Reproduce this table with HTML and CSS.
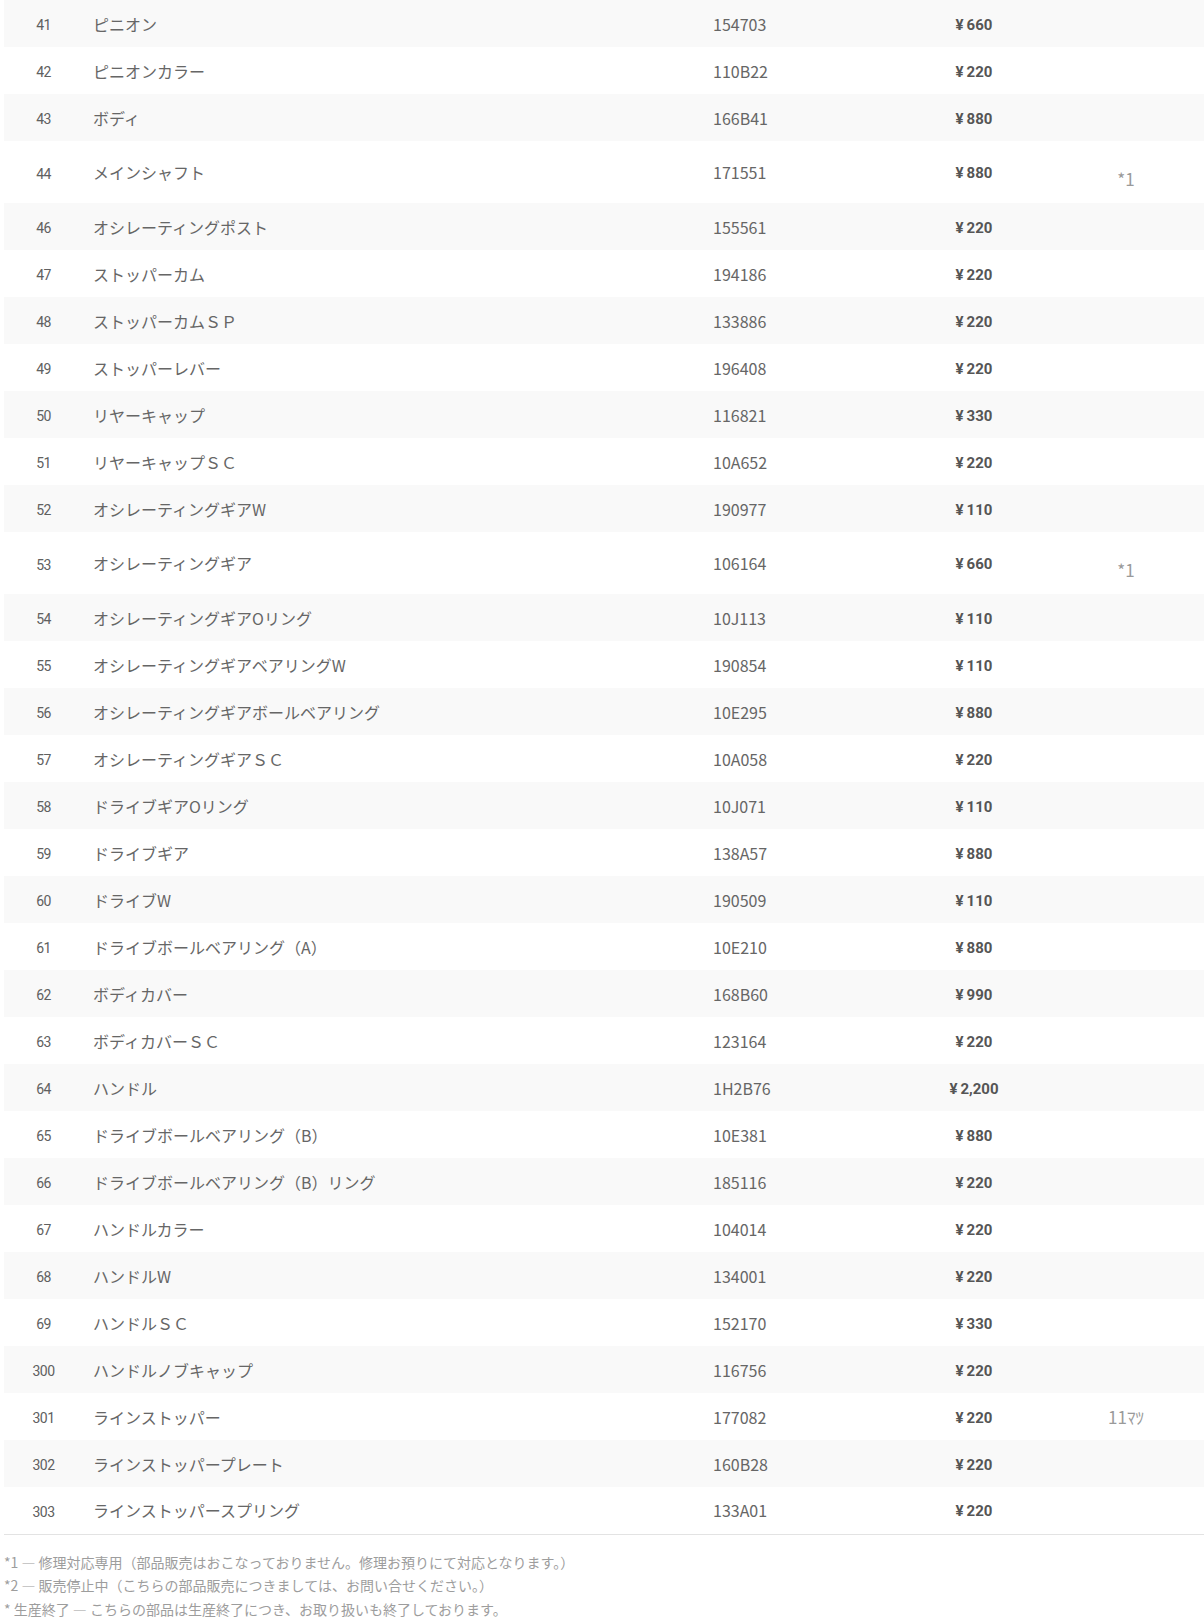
FILE: index.html
```html
<!DOCTYPE html>
<html lang="ja">
<head>
<meta charset="utf-8">
<title>パーツリスト</title>
<link rel="stylesheet" href="styles.css">
</head>
<body>
<div class="parts">
  <table class="parts-table">
    <colgroup>
      <col class="c-no"><col class="c-name"><col class="c-code"><col class="c-price"><col class="c-note">
    </colgroup>
    <tbody>
      <tr><td class="no">41</td><td class="name">ピニオン</td><td class="code">154703</td><td class="price"><span class="yen">¥</span>660</td><td class="note"></td></tr>
      <tr><td class="no">42</td><td class="name">ピニオンカラー</td><td class="code">110B22</td><td class="price"><span class="yen">¥</span>220</td><td class="note"></td></tr>
      <tr><td class="no">43</td><td class="name">ボディ</td><td class="code">166B41</td><td class="price"><span class="yen">¥</span>880</td><td class="note"></td></tr>
      <tr class="tall"><td class="no">44</td><td class="name">メインシャフト</td><td class="code">171551</td><td class="price"><span class="yen">¥</span>880</td><td class="note">*1</td></tr>
      <tr><td class="no">46</td><td class="name">オシレーティングポスト</td><td class="code">155561</td><td class="price"><span class="yen">¥</span>220</td><td class="note"></td></tr>
      <tr><td class="no">47</td><td class="name">ストッパーカム</td><td class="code">194186</td><td class="price"><span class="yen">¥</span>220</td><td class="note"></td></tr>
      <tr><td class="no">48</td><td class="name">ストッパーカムＳＰ</td><td class="code">133886</td><td class="price"><span class="yen">¥</span>220</td><td class="note"></td></tr>
      <tr><td class="no">49</td><td class="name">ストッパーレバー</td><td class="code">196408</td><td class="price"><span class="yen">¥</span>220</td><td class="note"></td></tr>
      <tr><td class="no">50</td><td class="name">リヤーキャップ</td><td class="code">116821</td><td class="price"><span class="yen">¥</span>330</td><td class="note"></td></tr>
      <tr><td class="no">51</td><td class="name">リヤーキャップＳＣ</td><td class="code">10A652</td><td class="price"><span class="yen">¥</span>220</td><td class="note"></td></tr>
      <tr><td class="no">52</td><td class="name">オシレーティングギアW</td><td class="code">190977</td><td class="price"><span class="yen">¥</span>110</td><td class="note"></td></tr>
      <tr class="tall"><td class="no">53</td><td class="name">オシレーティングギア</td><td class="code">106164</td><td class="price"><span class="yen">¥</span>660</td><td class="note">*1</td></tr>
      <tr><td class="no">54</td><td class="name">オシレーティングギアOリング</td><td class="code">10J113</td><td class="price"><span class="yen">¥</span>110</td><td class="note"></td></tr>
      <tr><td class="no">55</td><td class="name">オシレーティングギアベアリングW</td><td class="code">190854</td><td class="price"><span class="yen">¥</span>110</td><td class="note"></td></tr>
      <tr><td class="no">56</td><td class="name">オシレーティングギアボールベアリング</td><td class="code">10E295</td><td class="price"><span class="yen">¥</span>880</td><td class="note"></td></tr>
      <tr><td class="no">57</td><td class="name">オシレーティングギアＳＣ</td><td class="code">10A058</td><td class="price"><span class="yen">¥</span>220</td><td class="note"></td></tr>
      <tr><td class="no">58</td><td class="name">ドライブギアOリング</td><td class="code">10J071</td><td class="price"><span class="yen">¥</span>110</td><td class="note"></td></tr>
      <tr><td class="no">59</td><td class="name">ドライブギア</td><td class="code">138A57</td><td class="price"><span class="yen">¥</span>880</td><td class="note"></td></tr>
      <tr><td class="no">60</td><td class="name">ドライブW</td><td class="code">190509</td><td class="price"><span class="yen">¥</span>110</td><td class="note"></td></tr>
      <tr><td class="no">61</td><td class="name">ドライブボールベアリング（A）</td><td class="code">10E210</td><td class="price"><span class="yen">¥</span>880</td><td class="note"></td></tr>
      <tr><td class="no">62</td><td class="name">ボディカバー</td><td class="code">168B60</td><td class="price"><span class="yen">¥</span>990</td><td class="note"></td></tr>
      <tr><td class="no">63</td><td class="name">ボディカバーＳＣ</td><td class="code">123164</td><td class="price"><span class="yen">¥</span>220</td><td class="note"></td></tr>
      <tr><td class="no">64</td><td class="name">ハンドル</td><td class="code">1H2B76</td><td class="price"><span class="yen">¥</span>2,200</td><td class="note"></td></tr>
      <tr><td class="no">65</td><td class="name">ドライブボールベアリング（B）</td><td class="code">10E381</td><td class="price"><span class="yen">¥</span>880</td><td class="note"></td></tr>
      <tr><td class="no">66</td><td class="name">ドライブボールベアリング（B）リング</td><td class="code">185116</td><td class="price"><span class="yen">¥</span>220</td><td class="note"></td></tr>
      <tr><td class="no">67</td><td class="name">ハンドルカラー</td><td class="code">104014</td><td class="price"><span class="yen">¥</span>220</td><td class="note"></td></tr>
      <tr><td class="no">68</td><td class="name">ハンドルW</td><td class="code">134001</td><td class="price"><span class="yen">¥</span>220</td><td class="note"></td></tr>
      <tr><td class="no">69</td><td class="name">ハンドルＳＣ</td><td class="code">152170</td><td class="price"><span class="yen">¥</span>330</td><td class="note"></td></tr>
      <tr><td class="no">300</td><td class="name">ハンドルノブキャップ</td><td class="code">116756</td><td class="price"><span class="yen">¥</span>220</td><td class="note"></td></tr>
      <tr><td class="no">301</td><td class="name">ラインストッパー</td><td class="code">177082</td><td class="price"><span class="yen">¥</span>220</td><td class="note">11ﾏﾂ</td></tr>
      <tr><td class="no">302</td><td class="name">ラインストッパープレート</td><td class="code">160B28</td><td class="price"><span class="yen">¥</span>220</td><td class="note"></td></tr>
      <tr><td class="no">303</td><td class="name">ラインストッパースプリング</td><td class="code">133A01</td><td class="price"><span class="yen">¥</span>220</td><td class="note"></td></tr>
    </tbody>
  </table>
  <ul class="footnotes">
    <li>*1 ― 修理対応専用（部品販売はおこなっておりません。修理お預りにて対応となります。）</li>
    <li>*2 ― 販売停止中（こちらの部品販売につきましては、お問い合せください。）</li>
    <li>* 生産終了 ― こちらの部品は生産終了につき、お取り扱いも終了しております。</li>
  </ul>
</div>
</body>
</html>
```

FILE: styles.css
```css
html, body {
  margin: 0;
  padding: 0;
  background: #fff;
  overflow: hidden;
}

body {
  font-family: "Noto Sans CJK JP", sans-serif;
  color: #555;
}

.parts {
  padding-left: 4px;
  width: 1200px;
}

.parts-table {
  width: 1200px;
  border-collapse: collapse;
  table-layout: fixed;
  border-bottom: 1px solid #e3e3e3;
}

.c-no { width: 79px; }
.c-name { width: 620px; }
.c-code { width: 197px; }
.c-price { width: 148px; }
.c-note { width: 156px; }

.parts-table tr:nth-child(odd) {
  background: #f9f9f9;
}

.parts-table td {
  box-sizing: border-box;
  height: 47px;
  padding: 0;
  vertical-align: middle;
  line-height: 20px;
}

.parts-table tr.tall td {
  height: 62px;
}

.parts-table td.no {
  text-align: center;
  font-family: "Roboto", "Noto Sans CJK JP", sans-serif;
  font-weight: 400;
  font-size: 14px;
  letter-spacing: -0.04em;
  color: #606060;
  padding-top: 3px;
}

.parts-table td.name {
  padding-left: 10px;
  font-family: "Noto Sans CJK JP", sans-serif;
  font-weight: 400;
  font-size: 16px;
  color: #666;
}

.parts-table td.code {
  padding-left: 10px;
  font-family: "Noto Sans CJK JP", sans-serif;
  font-weight: 400;
  font-size: 16px;
  color: #666;
}

.parts-table td.price {
  text-align: center;
  font-family: "Roboto", "Liberation Sans", sans-serif;
  font-weight: 700;
  font-size: 15px;
  color: #555;
  padding-top: 2px;
}

.yen {
  margin-right: 3px;
}

.parts-table td.note {
  text-align: center;
  font-family: "Noto Sans CJK JP", sans-serif;
  font-weight: 400;
  font-size: 17px;
  color: #9a9a9a;
}

.parts-table tr.tall td.note {
  padding-top: 14px;
}

.footnotes {
  list-style: none;
  margin: 16px 0 0;
  padding: 0;
  font-family: "Noto Sans CJK JP", sans-serif;
  font-weight: 400;
  font-size: 14px;
  line-height: 23.7px;
  color: #9d9d9d;
}
```
